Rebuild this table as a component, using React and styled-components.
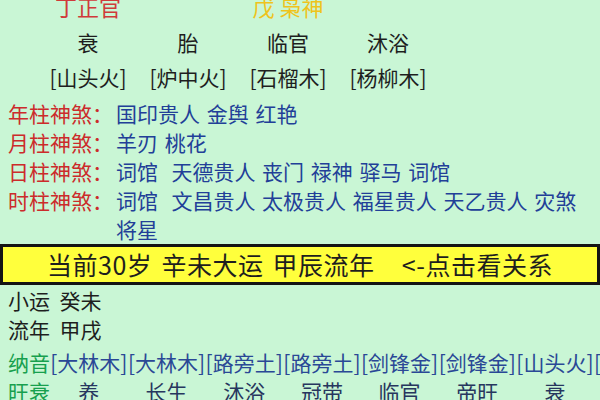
import React from "react";
import styled, { createGlobalStyle } from "styled-components";

const GlobalStyle = createGlobalStyle`
  html, body {
    margin: 0;
    padding: 0;
    background: #c9f6d5;
    overflow: hidden;
  }
  body {
    width: 600px;
    height: 400px;
    font-family: "Noto Sans CJK SC", "Noto Sans", sans-serif;
  }
`;

const Page = styled.div`
  width: 600px;
  height: 400px;
  overflow: hidden;
  background: #c9f6d5;
`;

const PillarGrid = styled.div`
  display: grid;
  grid-template-columns: repeat(4, 100px);
  padding-left: 38px;
  margin-top: -12px;
`;

const Cell = styled.div`
  height: ${p => p.h}px;
  line-height: ${p => p.h}px;
  text-align: center;
  font-size: ${p => (p.big ? 22 : 21)}px;
  color: ${p => p.color || "#1e1e1e"};
  white-space: pre;
`;

const Shensha = styled.div`
  display: grid;
  grid-template-columns: 108px 1fr;
  padding: 0 6px 0 8px;
  margin-top: 5px;
  font-size: 21px;
  line-height: 29px;
`;

const Label = styled.div`
  color: #cc2b2b;
  white-space: nowrap;
`;

const Value = styled.div`
  color: #223f98;
  white-space: pre-wrap;
  word-spacing: 2px;
`;

const Banner = styled.div`
  height: 35px;
  line-height: 35px;
  background: #ffff3c;
  border: 3px solid #141414;
  text-align: center;
  font-size: 25px;
  word-spacing: 3px;
  letter-spacing: 0.5px;
  color: #1e1e1e;
  white-space: pre;
`;

const LuckLine = styled.div`
  height: ${p => p.h}px;
  line-height: ${p => p.h}px;
  padding-left: 8px;
  font-size: 21px;
  color: #1e1e1e;
  white-space: pre;
`;

const NayinTable = styled.div`
  display: grid;
  grid-template-columns: 42px repeat(8, 77.7px);
  padding-left: 8px;
  font-size: 21px;
`;

const TableLabel = styled.div`
  height: ${p => p.h}px;
  line-height: ${p => p.h}px;
  color: #17a04e;
  white-space: nowrap;
`;

const TableCell = styled.div`
  height: ${p => p.h}px;
  line-height: ${p => p.h}px;
  text-align: center;
  color: ${p => p.color};
  white-space: nowrap;
`;

const stages = ["衰", "胎", "临官", "沐浴"];
const sounds = ["[山头火]", "[炉中火]", "[石榴木]", "[杨柳木]"];

const shensha = [
  ["年柱神煞：", "国印贵人 金舆 红艳"],
  ["月柱神煞：", "羊刃 桃花"],
  ["日柱神煞：", "词馆  天德贵人 丧门 禄神 驿马 词馆"],
  ["时柱神煞：", "词馆  文昌贵人 太极贵人 福星贵人 天乙贵人 灾煞 将星"]
];

const nayin = ["[大林木]", "[大林木]", "[路旁土]", "[路旁土]", "[剑锋金]", "[剑锋金]", "[山头火]", "[山头火]"];
const wangshuai = ["养", "长生", "沐浴", "冠带", "临官", "帝旺", "衰", "病"];

export default function App() {
  return (
    <Page>
      <GlobalStyle />
      <PillarGrid>
        <Cell h={36} big color="#d03a3a">丁正官</Cell>
        <Cell h={36} big />
        <Cell h={36} big color="#efc31c">戊 枭神</Cell>
        <Cell h={36} big />
        {stages.map((s, i) => (
          <Cell h={36} key={"s" + i}>{s}</Cell>
        ))}
        {sounds.map((s, i) => (
          <Cell h={34} key={"n" + i}>{s}</Cell>
        ))}
      </PillarGrid>

      <Shensha>
        {shensha.map(([label, value]) => (
          <React.Fragment key={label}>
            <Label>{label}</Label>
            <Value>{value}</Value>
          </React.Fragment>
        ))}
      </Shensha>

      <Banner>{"当前30岁 辛未大运 甲辰流年   <-点击看关系"}</Banner>

      <LuckLine h={30}>{"小运  癸未"}</LuckLine>
      <LuckLine h={29}>{"流年  甲戌"}</LuckLine>

      <NayinTable>
        <TableLabel h={36}>纳音</TableLabel>
        {nayin.map((n, i) => (
          <TableCell h={36} color="#2a4896" key={"y" + i}>{n}</TableCell>
        ))}
        <TableLabel h={22}>旺衰</TableLabel>
        {wangshuai.map((w, i) => (
          <TableCell h={22} color="#27365e" key={"w" + i}>{w}</TableCell>
        ))}
      </NayinTable>
    </Page>
  );
}
